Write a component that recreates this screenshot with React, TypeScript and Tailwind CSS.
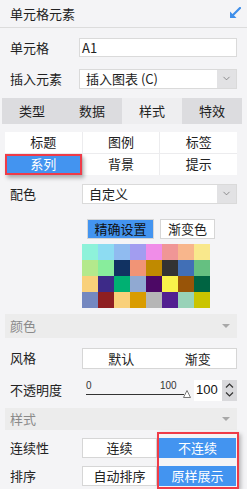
import { ChevronDown } from 'lucide-react';

const GRID = [
  ['#8ef2da', '#8ddcf2', '#90bbf0', '#a29df0', '#f08de8', '#f09696', '#f8b68c', '#f9e88c'],
  ['#b4e98c', '#88ed9c', '#113262', '#f19476', '#c08a00', '#333333', '#416fb6', '#65c081'],
  ['#f9d07a', '#3d2a88', '#00b072', '#90a9d2', '#4c0865', '#f9f24a', '#985408', '#006442'],
  ['#7488c0', '#8f1f22', '#f9d07a', '#d99c00', '#b6b6b6', '#521f90', '#98d2b8', '#cac400'],
];

const font = { fontFamily: '"Noto Sans CJK SC", "Noto Sans", sans-serif' };

function Row({ label, children, labelW = 'w-[77px]' }: { label: string; children: React.ReactNode; labelW?: string }) {
  return (
    <div className="flex items-center pl-[10px] pr-[10px]">
      <div className={`${labelW} shrink-0 text-[13px] text-[#222]`}>{label}</div>
      <div className="flex-1 min-w-0">{children}</div>
    </div>
  );
}

function Select({ value }: { value: string }) {
  return (
    <div className="flex h-[20px] bg-white border border-[#dadada]">
      <div className="flex-1 pl-[6px] text-[13px] leading-[18px] text-[#222]">{value}</div>
      <div className="w-[19px] bg-[#e2e2e4] flex items-center justify-center">
        <ChevronDown size={11} strokeWidth={1.5} className="text-[#666]" />
      </div>
    </div>
  );
}

function SectionHead({ title }: { title: string }) {
  return (
    <div className="mx-[5px] w-[232px] bg-[#ececec] flex items-center justify-between pl-[5px] pr-[7px] text-[13px] text-[#8a8a8a]">
      <span>{title}</span>
      <span className="w-0 h-0 border-l-[4px] border-r-[4px] border-t-[4px] border-l-transparent border-r-transparent border-t-[#a8a8a8]" />
    </div>
  );
}

export default function App() {
  const tabs = ['类型', '数据', '样式', '特效'];
  const sub = ['标题', '图例', '标签', '系列', '背景', '提示'];

  return (
    <div className="w-[247px] h-[489px] bg-[#f4f4f6] overflow-hidden" style={font}>
      <div className="h-[28px] flex items-center justify-between pl-[10px] pr-[6px] border-b border-[#dcdcdc]">
        <span className="text-[13px] text-[#222]">单元格元素</span>
        <svg width="12" height="12" viewBox="0 0 12 12" className="mt-[-1px]">
          <path d="M11 1 L3.5 8.5" stroke="#3f8fea" strokeWidth="2.2" strokeLinecap="round" />
          <path d="M1 4.5 L1 11 L7.5 11 Z" fill="#3f8fea" />
        </svg>
      </div>

      <div className="mt-[10px]">
        <Row label="单元格" labelW="w-[69px]">
          <div className="h-[19px] w-[158px] bg-white border border-[#dadada] pl-[2px] text-[13px] leading-[17px] text-[#222]">A1</div>
        </Row>
      </div>
      <div className="mt-[11px]">
        <Row label="插入元素" labelW="w-[69px]">
          <div className="w-[158px]"><Select value="插入图表 (C)" /></div>
        </Row>
      </div>

      <div className="mt-[9px] ml-[2px] w-[240px] h-[26px] grid grid-cols-4 text-[13px] text-[#222]">
        {tabs.map(t => (
          <div key={t} className={`flex items-center justify-center ${t === '样式' ? 'bg-[#eeeef0]' : 'bg-[#dcdcdf]'}`}>{t}</div>
        ))}
      </div>

      <div className="mt-[8px] ml-[5px] w-[232px] grid grid-cols-3 bg-[#ececee] gap-px text-[13px] text-[#222]">
        {sub.map(s => (
          s === '系列' ? (
            <div key={s} className="h-[21px] bg-white relative">
              <div className="absolute inset-0 bg-[#4394f0] border-2 border-[#ef3b48] text-white flex items-center justify-center shadow-[2px_3px_4px_rgba(0,0,0,0.3)]">{s}</div>
            </div>
          ) : (
            <div key={s} className="h-[21px] bg-white flex items-center justify-center">{s}</div>
          )
        ))}
      </div>

      <div className="mt-[9px]">
        <Row label="配色" labelW="w-[72px]">
          <div className="w-[155px]"><Select value="自定义" /></div>
        </Row>
      </div>

      <div className="mt-[15px] ml-[87px] flex gap-[6px] text-[13px]">
        <div className="w-[67px] h-[20px] bg-[#4394f0] border border-[#d6d6d6] text-[#111] flex items-center justify-center">精确设置</div>
        <div className="w-[55px] h-[20px] bg-white border border-[#d6d6d6] text-[#222] flex items-center justify-center">渐变色</div>
      </div>

      <div className="mt-[5px] ml-[82px] w-[128px] grid grid-cols-8">
        {GRID.flat().map((c, i) => (
          <div key={i} className="h-[16px]" style={{ background: c }} />
        ))}
      </div>

      <div className="mt-[6px] h-[24px] flex"><div className="flex"><SectionHead title="颜色" /></div></div>

      <div className="mt-[10px]">
        <Row label="风格" labelW="w-[72px]">
          <div className="w-[155px] h-[21px] bg-white border border-[#d6d6d6] grid grid-cols-2 text-[13px] text-[#222]">
            <div className="flex items-center justify-center">默认</div>
            <div className="flex items-center justify-center">渐变</div>
          </div>
        </Row>
      </div>

      <div className="mt-[11px] w-[237px] flex items-center pl-[10px]">
        <div className="w-[76px] shrink-0 text-[13px] text-[#222]">不透明度</div>
        <div className="relative w-[106px] h-[21px] shrink-0">
          <span className="absolute left-0 top-[1px] text-[10px] leading-[10px] text-[#333]" style={{ fontFamily: '"Liberation Sans", sans-serif' }}>0</span>
          <span className="absolute left-[74px] top-[1px] text-[10px] leading-[10px] text-[#333]" style={{ fontFamily: '"Liberation Sans", sans-serif' }}>100</span>
          <div className="absolute left-0 top-[14px] w-[98px] h-px bg-[#333]" />
          <svg className="absolute left-[97px] top-[10px]" width="8" height="8" viewBox="0 0 8 8">
            <path d="M4 0.5 L7.5 7.5 L0.5 7.5 Z" fill="white" stroke="#777" strokeWidth="1" />
          </svg>
        </div>
        <div className="ml-auto flex h-[21px]">
          <div className="w-[28px] bg-white flex items-center pl-[2px] text-[13px] text-[#111]" style={{ fontFamily: '"Liberation Sans", sans-serif' }}>100</div>
          <div className="w-[15px] bg-[#d9d9dc] flex items-center justify-center">
            <svg width="9" height="16" viewBox="0 0 9 16" fill="none" stroke="#333" strokeWidth="1.2">
              <path d="M1 5.5 L4.5 2 L8 5.5" />
              <path d="M1 10.5 L4.5 14 L8 10.5" />
            </svg>
          </div>
        </div>
      </div>

      <div className="mt-[7px] h-[22px] flex"><div className="flex"><SectionHead title="样式" /></div></div>

      <div className="relative mt-[8px] text-[13px]">
        <Row label="连续性" labelW="w-[72px]">
          <div className="flex gap-[2px]">
            <div className="w-[75px] h-[20px] bg-white border border-[#d6d6d6] flex items-center justify-center text-[#222]">连续</div>
            <div className="w-[77px] h-[20px] bg-[#4394f0] flex items-center justify-center text-white">不连续</div>
          </div>
        </Row>
        <div className="mt-[8px]">
          <Row label="排序" labelW="w-[72px]">
            <div className="flex gap-[2px]">
              <div className="w-[75px] h-[20px] bg-white border border-[#d6d6d6] flex items-center justify-center text-[#222]">自动排序</div>
              <div className="w-[77px] h-[20px] bg-[#4394f0] flex items-center justify-center text-white">原样展示</div>
            </div>
          </Row>
        </div>
        <div className="absolute left-[157px] top-[-6px] w-[82px] h-[57px] border-2 border-[#ef3b48] shadow-[2px_2px_4px_rgba(0,0,0,0.25)] pointer-events-none" />
      </div>
    </div>
  );
}
